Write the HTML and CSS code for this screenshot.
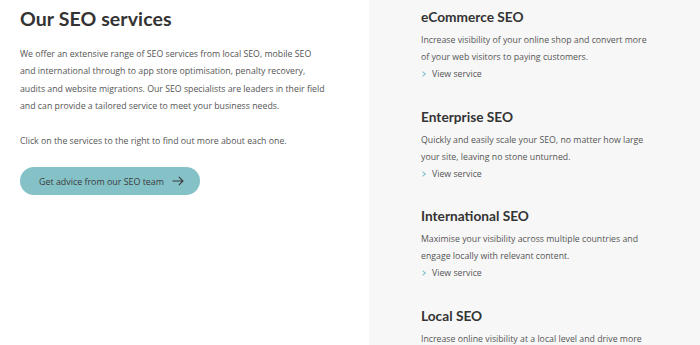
FILE: index.html
```html
<!DOCTYPE html>
<html lang="en">
<head>
  <meta charset="UTF-8">
  <meta name="viewport" content="width=device-width, initial-scale=1.0">
  <title>Our SEO services</title>
  <link rel="stylesheet" href="styles.css">
</head>
<body>
  <div class="page">
    <div class="intro">
      <h1>Our SEO services</h1>
      <p>We offer an extensive range of SEO services from local SEO, mobile SEO<br>
        and international through to app store optimisation, penalty recovery,<br>
        audits and website migrations. Our SEO specialists are leaders in their field<br>
        and can provide a tailored service to meet your business needs.</p>
      <p>Click on the services to the right to find out more about each one.</p>
      <a class="button" href="#">Get advice from our SEO team
        <svg width="12" height="10" viewBox="0 0 12 10"><path d="M0.5 5H11M6.8 0.8L11 5L6.8 9.2" fill="none" stroke="#3a3a3a" stroke-width="1.1"/></svg>
      </a>
    </div>

    <div class="services">
      <div class="service">
        <h2>eCommerce SEO</h2>
        <p>Increase visibility of your online shop and convert more of your web visitors to paying customers.</p>
        <a class="view" href="#">View service</a>
      </div>
      <div class="service">
        <h2>Enterprise SEO</h2>
        <p>Quickly and easily scale your SEO, no matter how large your site, leaving no stone unturned.</p>
        <a class="view" href="#">View service</a>
      </div>
      <div class="service">
        <h2>International SEO</h2>
        <p>Maximise your visibility across multiple countries and engage locally with relevant content.</p>
        <a class="view" href="#">View service</a>
      </div>
      <div class="service">
        <h2>Local SEO</h2>
        <p>Increase online visibility at a local level and drive more footfall to your stores.</p>
        <a class="view" href="#">View service</a>
      </div>
    </div>
  </div>
</body>
</html>
```

FILE: styles.css
```css
body {
  margin: 0;
  font-family: "Open Sans", Arial, sans-serif;
  color: #555555;
  background-color: #ffffff;
  overflow: hidden;
}

.page {
  display: flex;
  height: 345px;
  overflow: hidden;
}

.intro {
  width: 329px;
  padding: 7px 20px 0 20px;
}

h1 {
  font-family: "Lato", Arial, sans-serif;
  font-weight: 700;
  font-size: 19.5px;
  color: #333333;
  margin: 0 0 16px 0;
  letter-spacing: 0.1px;
}

.intro p {
  font-size: 8.75px;
  line-height: 17.4px;
  margin: 0 0 17px 0;
  white-space: nowrap;
}

.button {
  display: inline-flex;
  align-items: center;
  gap: 8px;
  height: 28px;
  padding: 0 16px 0 19px;
  border-radius: 14px;
  background-color: #85c2c8;
  color: #3a3a3a;
  font-size: 8.9px;
  text-decoration: none;
}

.services {
  flex: 1;
  background-color: #f7f7f7;
  padding: 8px 0 0 52px;
}

.service {
  margin-bottom: 25.6px;
}

h2 {
  font-family: "Lato", Arial, sans-serif;
  font-weight: 700;
  font-size: 13.7px;
  color: #333333;
  margin: 0 0 7px 0;
}

.service p {
  font-size: 8.75px;
  line-height: 17px;
  margin: 0;
  width: 232px;
}

.view {
  display: flex;
  align-items: center;
  font-size: 8.75px;
  line-height: 16px;
  color: #555555;
  text-decoration: none;
}

.view::before {
  content: "";
  width: 3px;
  height: 3px;
  border-top: 1px solid #7fc0c8;
  border-right: 1px solid #7fc0c8;
  transform: rotate(45deg);
  margin: 0 7px 0 0;
}
```
